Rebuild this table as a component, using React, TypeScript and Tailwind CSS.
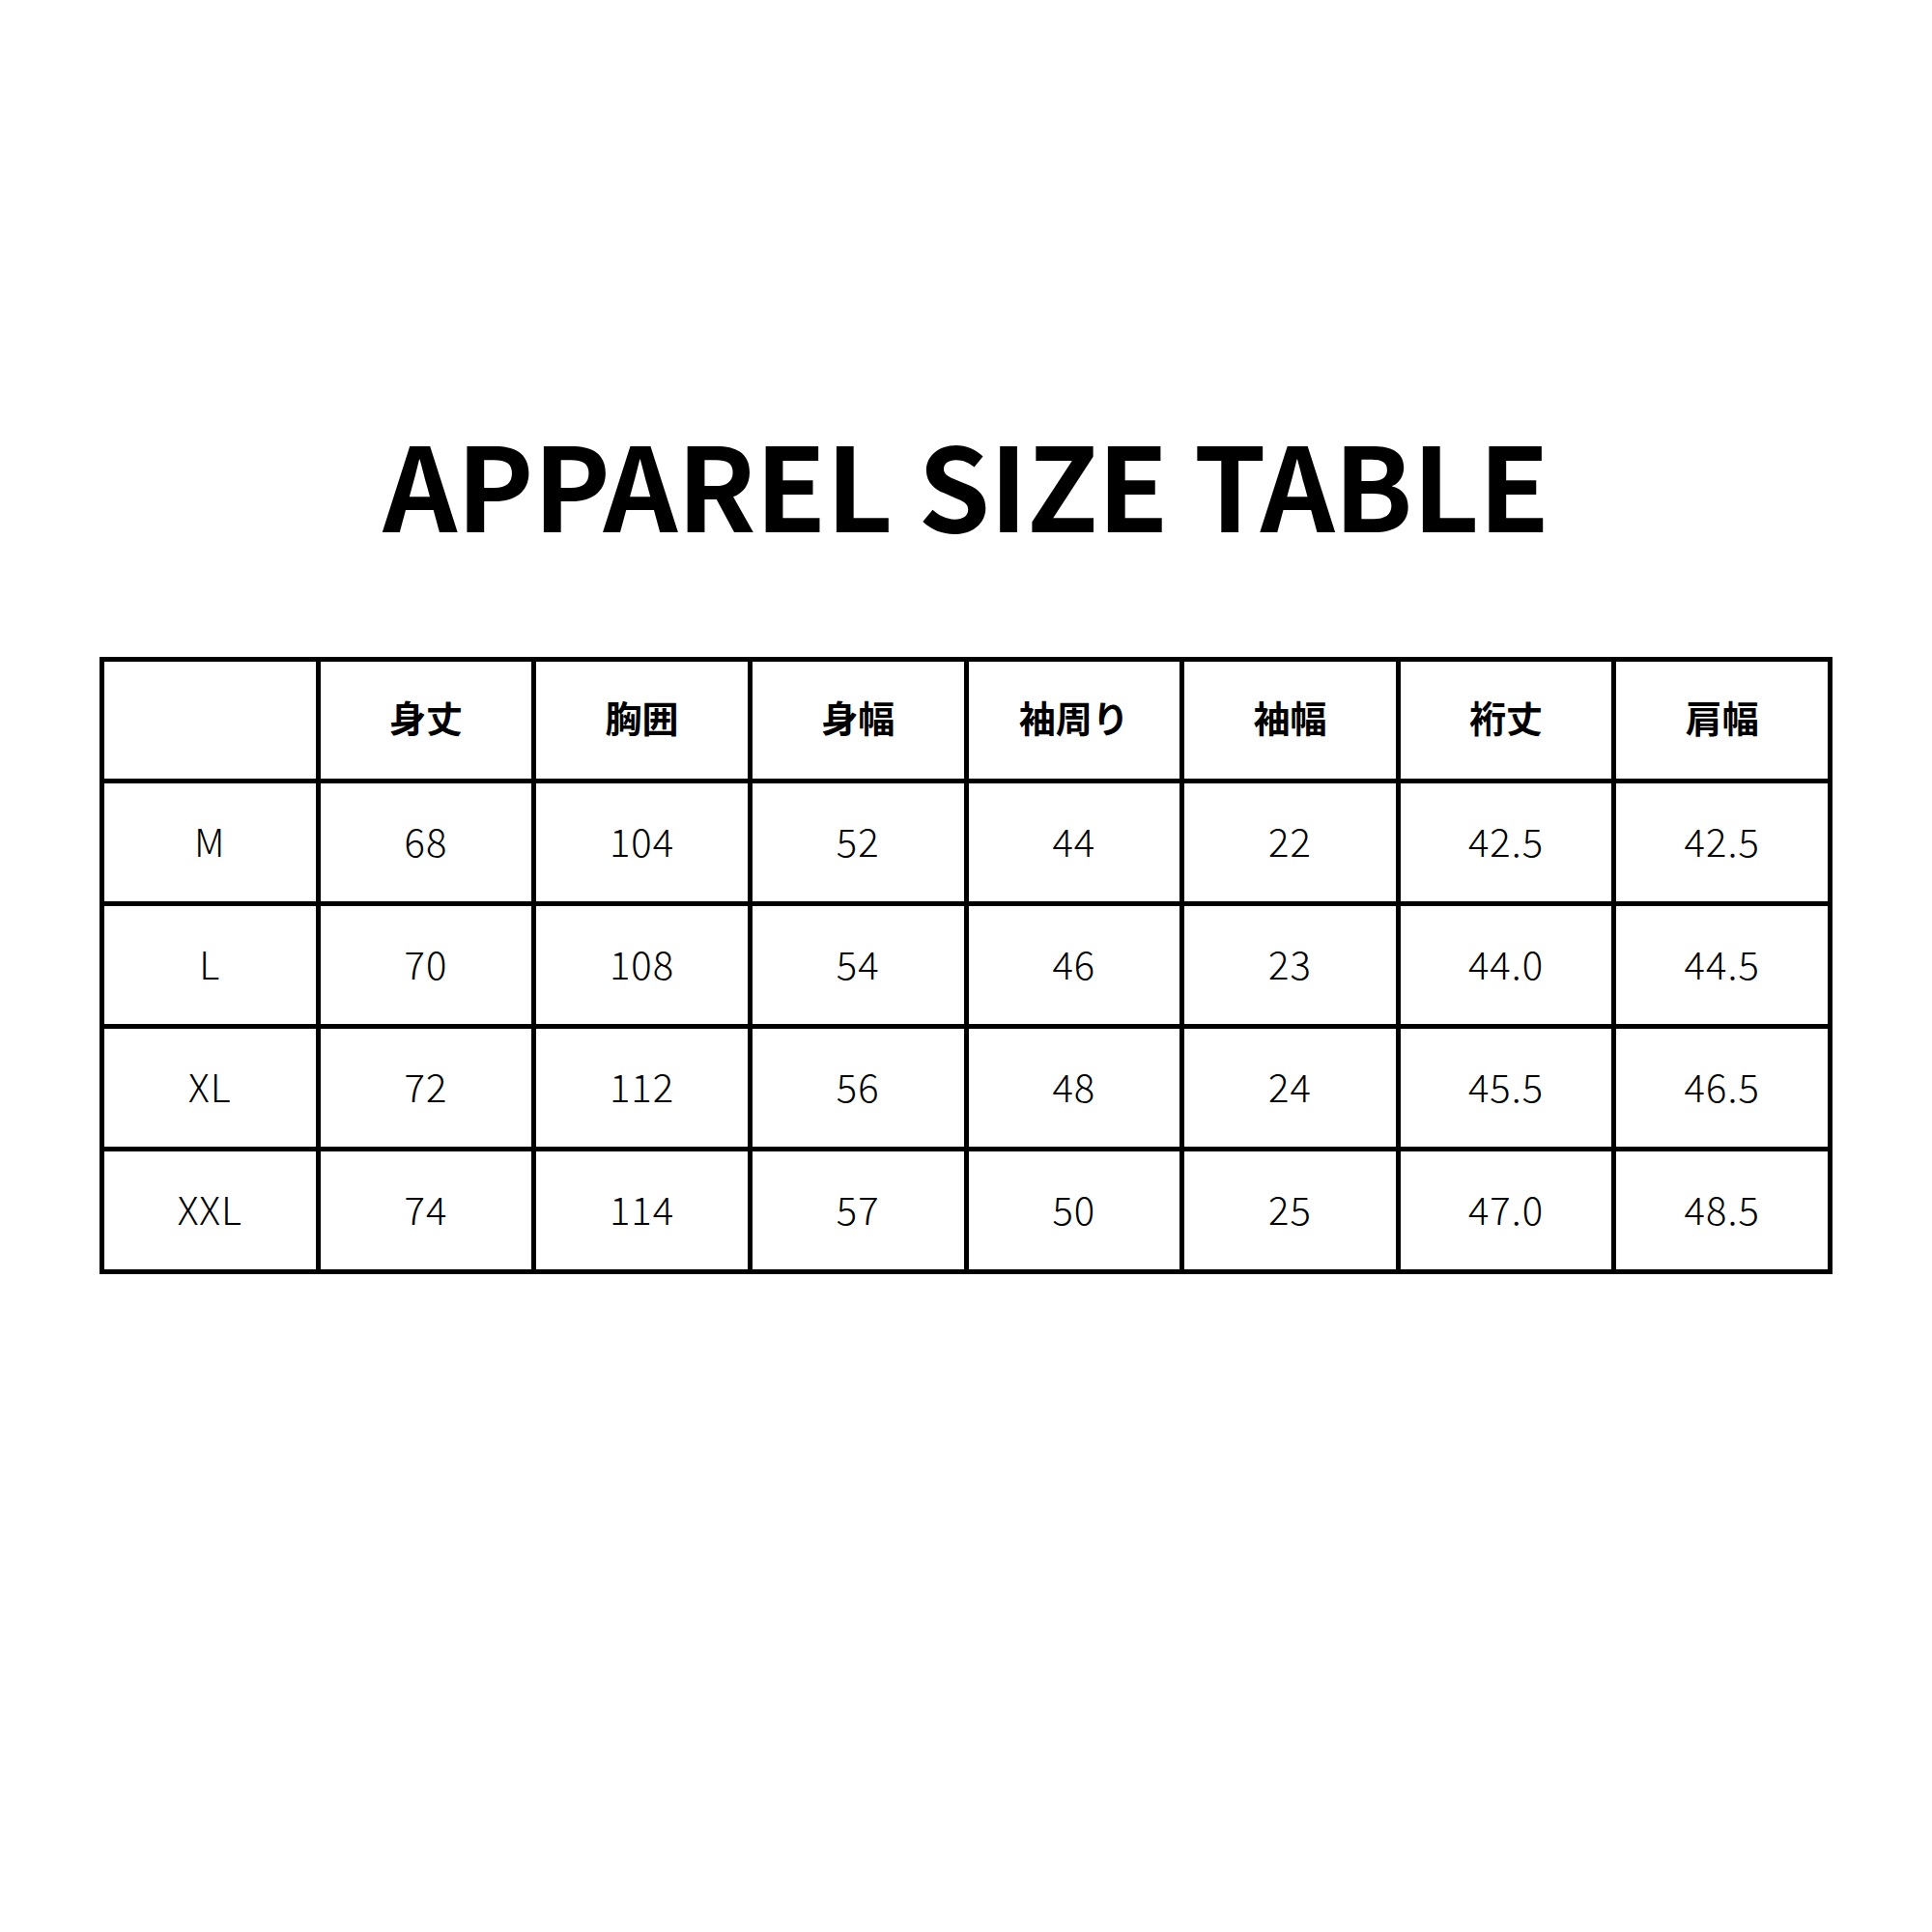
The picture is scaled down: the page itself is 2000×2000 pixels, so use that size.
import React from "react";

const headers = ["", "身丈", "胸囲", "身幅", "袖周り", "袖幅", "裄丈", "肩幅"];
const rows = [
  ["M", "68", "104", "52", "44", "22", "42.5", "42.5"],
  ["L", "70", "108", "54", "46", "23", "44.0", "44.5"],
  ["XL", "72", "112", "56", "48", "24", "45.5", "46.5"],
  ["XXL", "74", "114", "57", "50", "25", "47.0", "48.5"],
];

const font = { fontFamily: '"Noto Sans CJK JP", "Noto Sans", sans-serif' };

export default function App() {
  return (
    <div className="w-[2000px] h-[2000px] bg-white flex flex-col items-center text-black" style={font}>
      <h1 className="mt-[439px] h-[120px] text-[120px] leading-none font-bold tracking-[-0.7px] whitespace-nowrap">
        APPAREL SIZE TABLE
      </h1>
      <div className="mt-[121px] w-[1794px] grid grid-cols-8 gap-[5px] p-[5px] bg-black">
        {headers.map((h, i) => (
          <div key={"h" + i} className="bg-white h-[121px] pb-[8px] flex items-center justify-center text-[38px] font-bold leading-none">
            {h}
          </div>
        ))}
        {rows.map((r, ri) =>
          r.map((c, ci) => (
            <div key={ri + "-" + ci} className="bg-white h-[122px] pb-[5px] flex items-center justify-center text-[40px] font-light leading-none tracking-[1px]">
              {c}
            </div>
          ))
        )}
      </div>
    </div>
  );
}
